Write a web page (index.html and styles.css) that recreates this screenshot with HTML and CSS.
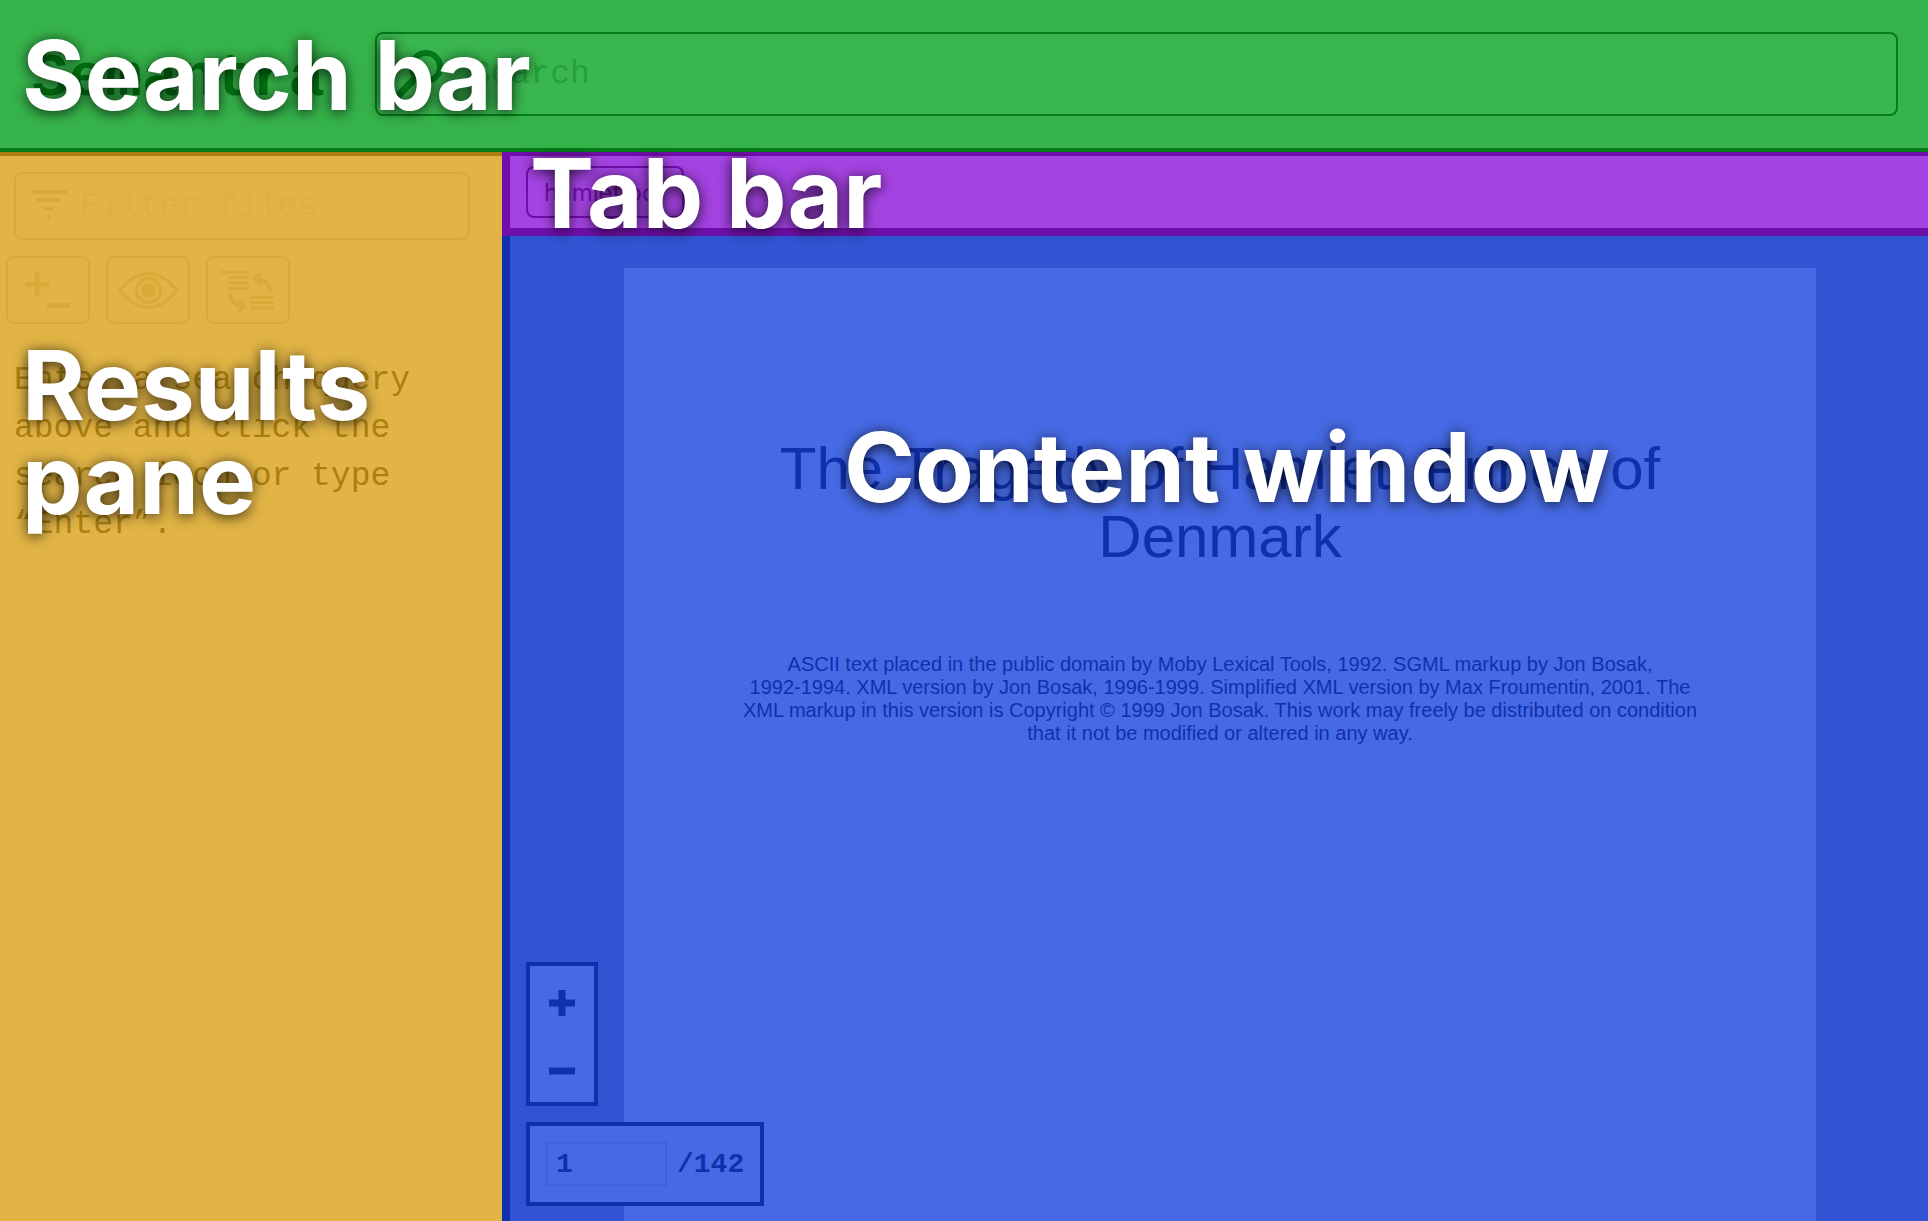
FILE: index.html
```html
<!DOCTYPE html>
<html lang="en">
<head>
<meta charset="utf-8">
<title>Semantra</title>
<link rel="stylesheet" href="styles.css">
</head>
<body>
<div class="app">
  <header class="search-bar">
    <a class="logo" href="#">Semantra</a>
    <form class="search-box">
      <svg class="search-icon" viewBox="0 0 54 60" aria-hidden="true"><circle cx="33" cy="23" r="14" fill="none" stroke="currentColor" stroke-width="6"/><path d="M23 33 4 53" fill="none" stroke="currentColor" stroke-width="7"/></svg>
      <input class="search-input" type="search" placeholder="Search" aria-label="Search">
    </form>
    <strong class="label label-search">Search bar</strong>
  </header>

  <aside class="results-pane">
    <label class="filter">
      <svg class="filter-icon" viewBox="0 0 38 30" aria-hidden="true"><path d="M1 1h36v4H1zM7 9h23v4H7zM14 18h9v4h-9zM17 26h3v4h-3z" fill="currentColor"/></svg>
      <input class="filter-input" type="text" placeholder="Filter files" aria-label="Filter files">
    </label>
    <div class="tools">
      <button class="tool" type="button" aria-label="Expand or collapse"><svg viewBox="0 0 84 68"><path d="M19 28.500h24M31 16v24.500" fill="none" stroke="currentColor" stroke-width="5"/><path d="M41 49.500h23" stroke="currentColor" stroke-width="5"/></svg></button>
      <button class="tool" type="button" aria-label="Show"><svg viewBox="0 0 84 68"><path d="M13.500 34.500Q28 17.500 42.500 17.500T71 34.500Q57 51.500 42.500 51.500T13.500 34.500Z" fill="none" stroke="currentColor" stroke-width="3"/><circle cx="42.500" cy="34.500" r="12" fill="none" stroke="currentColor" stroke-width="3"/><circle cx="42.500" cy="34.500" r="7.500" fill="currentColor"/></svg></button>
      <button class="tool" type="button" aria-label="Swap order"><svg viewBox="0 0 84 68"><path d="M15 16h28M22 21.500h21M22 27h21M22 32.500h21M44 41.500h24M44 46.500h24M44 52h24" fill="none" stroke="currentColor" stroke-width="3"/><path d="M64 36q0-12-15-13M55 18l-6 5 6 5M24 37.500q1 12 14 13M33 44l6 6.500-6 5" fill="none" stroke="currentColor" stroke-width="4"/></svg></button>
    </div>
    <p class="hint">Enter a search query above and click the search icon or type “Enter”.</p>
    <strong class="label label-results">Results pane</strong>
  </aside>

  <nav class="tab-bar">
    <button class="tab" type="button">hamlet.pdf</button>
    <strong class="label label-tab">Tab bar</strong>
  </nav>

  <main class="content">
    <article class="page">
      <h1 class="title">The Tragedy of Hamlet, Prince of Denmark</h1>
      <p class="notice">ASCII text placed in the public domain by Moby Lexical Tools, 1992. SGML markup by Jon Bosak,<br>1992-1994. XML version by Jon Bosak, 1996-1999. Simplified XML version by Max Froumentin, 2001. The<br>XML markup in this version is Copyright © 1999 Jon Bosak. This work may freely be distributed on condition<br>that it not be modified or altered in any way.</p>
    </article>
    <div class="controls">
      <div class="zoom">
        <button class="zoom-button" type="button" aria-label="Zoom in"><svg viewBox="0 0 26 26"><path d="M0 13h26M13 0v26" stroke="currentColor" stroke-width="7"/></svg></button>
        <button class="zoom-button" type="button" aria-label="Zoom out"><svg viewBox="0 0 26 26"><path d="M0 13h26" stroke="currentColor" stroke-width="7"/></svg></button>
      </div>
      <label class="pager"><input class="page-input" type="text" value="1" aria-label="Page"><span>/142</span></label>
    </div>
    <strong class="label label-content">Content window</strong>
  </main>
</div>
</body>
</html>
```
FILE: styles.css
```css
* { box-sizing: border-box; }

body {
  margin: 0;
  font-family: "Liberation Mono", monospace;
}

button, input { font: inherit; color: inherit; }

.app {
  display: grid;
  grid-template: 152px 84px 1fr / 502px 1fr;
  height: 100vh;
  overflow: hidden;
}

.label {
  position: absolute;
  z-index: 2;
  font: bold 96px/94px Inter, sans-serif;
  color: #fff;
  text-shadow: 0 2px 14px rgb(0 0 0 / 80%);
  pointer-events: none;
}

.search-bar {
  position: relative;
  z-index: 1;
  grid-column: 1 / -1;
  display: flex;
  align-items: center;
  gap: 50px;
  padding: 0 30px 0 32px;
  background: #36b44b;
  border-bottom: 4px solid #047d19;
  color: #047d19;
}

.logo {
  width: 293px;
  padding-top: 10px;
  font: bold 61px/84px "Liberation Mono", monospace;
  color: #007812;
  text-decoration: none;
}

.search-box {
  flex: 1;
  display: flex;
  align-items: center;
  gap: 24px;
  height: 84px;
  padding: 0 16px;
  background: #3ab64f;
  border: 2px solid #047d19;
  border-radius: 8px;
}

.search-icon { width: 54px; height: 60px; }

.search-input, .filter-input {
  flex: 1;
  min-width: 0;
  padding: 0;
  border: 0;
  outline: 0;
  background: none;
  font: 33px "Liberation Mono", monospace;
}

.search-input::placeholder { color: #25a13a; opacity: 1; }

.label-search { left: 22px; top: 28px; }

.results-pane {
  position: relative;
  grid-row: 2 / 4;
  padding: 16px 32px 0 14px;
  background: #e1b445;
  border-top: 4px solid #ac7f10;
  color: #ac7f10;
}

.filter {
  display: flex;
  align-items: center;
  gap: 12px;
  height: 68px;
  padding: 0 14px;
  border: 2px solid #d8aa39;
  border-radius: 8px;
  color: #d8aa39;
}

.filter-icon { width: 38px; height: 30px; margin-bottom: 4px; }

.filter-input::placeholder { color: #ddb041; opacity: 1; }

.tools {
  display: flex;
  gap: 16px;
  margin: 16px 0 0 -8px;
}

.tool {
  width: 84px;
  height: 68px;
  padding: 0;
  border: 2px solid #d8aa39;
  border-radius: 8px;
  background: none;
  color: #d8aa39;
}

.tool svg { display: block; margin: -2px; width: 84px; height: 68px; }

.hint {
  width: 420px;
  margin: 33px 0 0;
  font: 33px/48px "Liberation Mono", monospace;
}

.label-results { left: 22px; top: 182px; width: 400px; }

.tab-bar {
  position: relative;
  z-index: 2;
  padding: 10px 16px;
  background: #a443e2;
  border: solid #6f0fa9;
  border-width: 4px 0 8px 8px;
}

.tab {
  width: 158px;
  height: 52px;
  padding: 0 16px;
  border: 2px solid #6f0fa9;
  border-radius: 8px;
  background: none;
  color: #6f0fa9;
  font: 24px Inter, sans-serif;
  text-align: left;
}

.label-tab { left: 20px; top: -10px; }

.content {
  position: relative;
  padding: 32px 112px 0 114px;
  background: #3054d2;
  border-left: 8px solid #0f31ad;
  color: #0f31ad;
}

.page {
  height: 100%;
  padding: 167px 112px 0;
  background: #466ae5;
  text-align: center;
  font-family: "Liberation Sans", sans-serif;
}

.title { margin: 0; font-weight: 400; font-size: 60px; line-height: 68px; }

.notice { margin: 82px 0 0; font-size: 20px; line-height: 23px; white-space: nowrap; }

.controls {
  position: absolute;
  left: 16px;
  bottom: 15px;
  display: flex;
  flex-direction: column;
  align-items: flex-start;
  gap: 16px;
}

.zoom, .pager {
  display: flex;
  background: #466ae5;
  border: 4px solid #0f31ad;
}

.zoom { flex-direction: column; width: 72px; height: 144px; }

.zoom-button {
  flex: 1;
  display: grid;
  place-items: center;
  padding: 6px 0 0;
  border: 0;
  background: none;
}

.zoom-button svg { width: 26px; height: 26px; }

.pager {
  align-items: center;
  gap: 10px;
  width: 238px;
  height: 84px;
  padding: 0 16px;
  font: bold 28px "Liberation Mono", monospace;
}

.page-input {
  width: 121px;
  height: 44px;
  padding: 0 8px;
  border: 2px solid #3e61dc;
  background: none;
}

.label-content { left: 16px; right: 0; top: 184px; text-align: center; }
```
